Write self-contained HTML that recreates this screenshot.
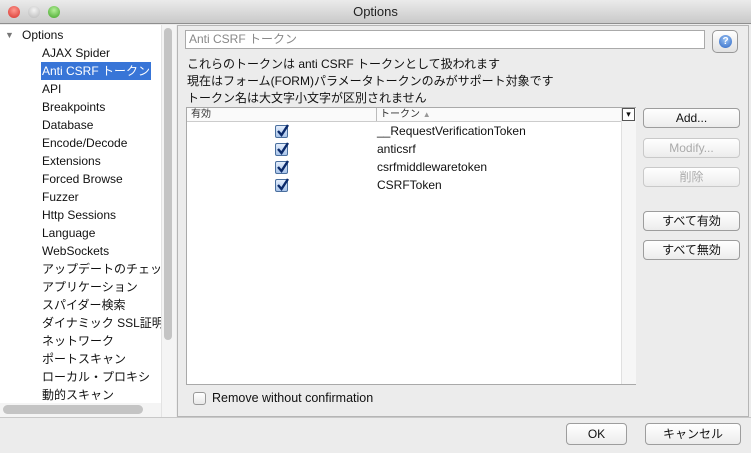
<!DOCTYPE html>
<html><head><meta charset="utf-8"><style>
*{margin:0;padding:0;box-sizing:border-box}
body{width:751px;height:453px;overflow:hidden;background:#ececec;font-family:"Liberation Sans","Noto Sans CJK JP",sans-serif;font-size:12px;color:#111;position:relative}
.a{position:absolute}
.title{left:0;top:0;width:751px;height:24px;background:linear-gradient(#ebebeb,#c9c9c9);border-bottom:1px solid #8e8e8e;text-align:center;line-height:24px;font-size:13px;color:#222}
.dot{top:6px;width:12px;height:12px;border-radius:50%}
.tree{left:0;top:25px;width:161px;height:378px;background:#fff}
.tree div{position:absolute;white-space:nowrap;line-height:18px;height:18px}
.vtrack{left:161px;top:25px;width:15px;height:392px;background:#f4f4f4;border-left:1px solid #e3e3e3}
.vthumb{left:164px;top:28px;width:8px;height:312px;background:#c4c4c4;border-radius:4px}
.htrack{left:0;top:403px;width:161px;height:14px;background:#f4f4f4}
.hthumb{left:3px;top:405px;width:140px;height:9px;background:#c4c4c4;border-radius:5px}
.right{left:177px;top:25px;width:572px;height:392px;border:1px solid #b5b5b5;background:#ececec}
.tf{left:185px;top:30px;width:520px;height:19px;background:#fff;border:1px solid #aaa;color:#888;font-size:12px;line-height:17px;padding-left:3px}
.help{left:712px;top:30px;width:26px;height:23px;border:1px solid #999;border-radius:5px;background:linear-gradient(#fff,#e2e2e2)}
.lbl{left:187px;font-size:12px;line-height:17px;white-space:nowrap}
.table{left:186px;top:107px;width:450px;height:278px;background:#fff;border:1px solid #a9a9a9}
.hdr{left:0;top:0;width:434px;height:14px;border-bottom:1px solid #ccc;background:#fafafa;font-size:10px;line-height:13px;color:#333}
.cb{left:88px;width:13px;height:13px;border:1px solid #4a6f9e;border-radius:2px;background:linear-gradient(#e4eefc,#a9c4ea)}
.cb svg{position:absolute;left:0;top:-2px}
.tok{left:190px;font-size:12px;line-height:18px}
.btn{left:643px;width:97px;height:20px;border:1px solid #9d9d9d;border-radius:4px;background:linear-gradient(#fff,#ececec);text-align:center;line-height:18px;font-size:12px}
.dis{color:#aaa;border-color:#c9c9c9}
</style></head><body>
<div class="a title">Options</div>
<div class="a dot" style="left:8px;background:radial-gradient(circle at 50% 35%,#ff9a90,#d6302a)"></div>
<div class="a dot" style="left:28px;background:radial-gradient(circle at 50% 35%,#f4f4f4,#b5b5b5)"></div>
<div class="a dot" style="left:48px;background:radial-gradient(circle at 50% 35%,#b5f09a,#3ea324)"></div>

<div class="a tree">
<div style="left:5px;top:1px;font-size:9px;color:#777">▼</div>
<div style="left:22px;top:1px">Options</div>
<div style="left:42px;top:19px">AJAX Spider</div>
<div style="left:41px;top:37px;width:110px;background:#3875d7;color:#fff;padding-left:1px">Anti CSRF トークン</div>
<div style="left:42px;top:55px">API</div>
<div style="left:42px;top:73px">Breakpoints</div>
<div style="left:42px;top:91px">Database</div>
<div style="left:42px;top:109px">Encode/Decode</div>
<div style="left:42px;top:127px">Extensions</div>
<div style="left:42px;top:145px">Forced Browse</div>
<div style="left:42px;top:163px">Fuzzer</div>
<div style="left:42px;top:181px">Http Sessions</div>
<div style="left:42px;top:199px">Language</div>
<div style="left:42px;top:217px">WebSockets</div>
<div style="left:42px;top:235px">アップデートのチェック</div>
<div style="left:42px;top:253px">アプリケーション</div>
<div style="left:42px;top:271px">スパイダー検索</div>
<div style="left:42px;top:289px">ダイナミック SSL証明書</div>
<div style="left:42px;top:307px">ネットワーク</div>
<div style="left:42px;top:325px">ポートスキャン</div>
<div style="left:42px;top:343px">ローカル・プロキシ</div>
<div style="left:42px;top:361px">動的スキャン</div>
</div>
<div class="a" style="left:161px;top:25px;width:1px;height:378px;background:#fff"></div>
<div class="a vtrack"></div><div class="a vthumb"></div>
<div class="a htrack"></div><div class="a hthumb"></div>

<div class="a right"></div>
<div class="a tf">Anti CSRF トークン</div>
<div class="a help"><div class="a" style="left:6px;top:4px;width:13px;height:13px;border-radius:50%;background:radial-gradient(circle at 50% 35%,#9cc4f5,#2c66c4);color:#fff;font-size:10px;font-weight:bold;text-align:center;line-height:13px">?</div></div>
<div class="a lbl" style="top:56px">これらのトークンは anti CSRF トークンとして扱われます</div>
<div class="a lbl" style="top:73px">現在はフォーム(FORM)パラメータトークンのみがサポート対象です</div>
<div class="a lbl" style="top:90px">トークン名は大文字小文字が区別されません</div>

<div class="a table">
<div class="a hdr"><span class="a" style="left:4px">有効</span><span class="a" style="left:189px;border-left:1px solid #bbb;padding-left:3px">トークン <span style="color:#999;font-size:8px">▲</span></span></div>
<div class="a" style="left:434px;top:0;width:15px;height:276px;background:#f6f6f6;border-left:1px solid #e0e0e0"></div>
<div class="a" style="left:435px;top:0;width:13px;height:13px;border:1px solid #555;background:#fff;font-size:9px;line-height:10px;text-align:center">▾</div>
<div class="a cb" style="top:17px"><svg width="13" height="14"><path d="M2 7 L5.5 11 L12 1" stroke="#0b2a6b" stroke-width="2.4" fill="none"/></svg></div>
<div class="a cb" style="top:35px"><svg width="13" height="14"><path d="M2 7 L5.5 11 L12 1" stroke="#0b2a6b" stroke-width="2.4" fill="none"/></svg></div>
<div class="a cb" style="top:53px"><svg width="13" height="14"><path d="M2 7 L5.5 11 L12 1" stroke="#0b2a6b" stroke-width="2.4" fill="none"/></svg></div>
<div class="a cb" style="top:71px"><svg width="13" height="14"><path d="M2 7 L5.5 11 L12 1" stroke="#0b2a6b" stroke-width="2.4" fill="none"/></svg></div>
<div class="a tok" style="top:14px">__RequestVerificationToken</div>
<div class="a tok" style="top:32px">anticsrf</div>
<div class="a tok" style="top:50px">csrfmiddlewaretoken</div>
<div class="a tok" style="top:68px">CSRFToken</div>
</div>

<div class="a btn" style="top:108px">Add...</div>
<div class="a btn dis" style="top:138px">Modify...</div>
<div class="a btn dis" style="top:167px">削除</div>
<div class="a btn" style="top:211px">すべて有効</div>
<div class="a btn" style="top:240px">すべて無効</div>

<div class="a" style="left:193px;top:392px;width:13px;height:13px;border:1px solid #999;border-radius:3px;background:linear-gradient(#fff,#e8e8e8)"></div>
<div class="a" style="left:212px;top:390px;font-size:12.5px;line-height:17px">Remove without confirmation</div>

<div class="a" style="left:0;top:417px;width:751px;height:1px;background:#c8c8c8"></div>
<div class="a btn" style="left:566px;top:423px;width:61px;height:22px;line-height:20px">OK</div>
<div class="a btn" style="left:645px;top:423px;width:96px;height:22px;line-height:20px">キャンセル</div>
</body></html>
